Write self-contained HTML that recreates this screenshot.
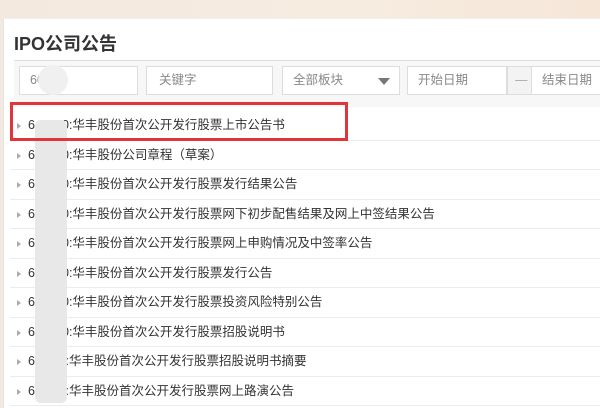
<!DOCTYPE html><html><head><meta charset="utf-8"><style>
*{margin:0;padding:0;box-sizing:border-box}
body{width:600px;height:403px;overflow:hidden;background:linear-gradient(90deg,#f3e9df,#f7ece0 60%,#f5e6d8);font-family:"Liberation Sans","Noto Sans CJK SC",sans-serif;position:relative}
.panel{position:absolute;left:3px;top:18px;width:600px;height:390px;background:#fff;border-left:1px solid #e4e4e4;border-top:1px solid #eee}
.title{position:absolute;left:10px;top:11px;font-size:18px;font-weight:bold;color:#333}
.bar{position:absolute;left:10px;top:41px;width:590px;height:47px;background:#f7f7f7;border-top:1px solid #ddd}
.in{position:absolute;top:5px;height:29px;background:#fff;border:1px solid #ddd;font-size:12.5px;color:#888;line-height:27px;padding-left:10px}
.row{position:absolute;left:10px;width:590px;height:29.5px;border-bottom:1px solid #ececec;font-size:12.5px;color:#333;line-height:29px}
.row .a{position:absolute;left:7px;top:12px;width:0;height:0;border-left:4px solid #aaa;border-top:3.5px solid transparent;border-bottom:3.5px solid transparent}
.row .t{position:absolute;left:18px}
.row .u{position:absolute;left:52px}
.blob{position:absolute;left:35px;top:120px;width:32px;height:283px;background:#e8e8e8;border-radius:6px}
.red{position:absolute;left:10px;top:102px;width:338px;height:39px;border:3px solid #e2353b}
</style></head><body>
<div class="panel">
<div class="title">IPO公司公告</div>
<div class="bar">
<div class="in" style="left:5px;width:119px">60</div>
<div class="in" style="left:132px;width:127px;padding-left:12px">关键字</div>
<div class="in" style="left:268px;width:118px">全部板块<span style="position:absolute;right:9px;top:11px;border-top:7px solid #777;border-left:6px solid transparent;border-right:6px solid transparent"></span></div>
<div class="in" style="left:393px;width:100px">开始日期</div>
<div class="in" style="left:493px;width:25px;background:#f3f3f3;padding-left:7px;color:#aaa">—</div>
<div class="in" style="left:517px;width:80px">结束日期</div>
</div>
</div>
<div style="position:absolute;left:38px;top:65px;width:30px;height:30px;border-radius:50%;background:#f0f0f0"></div>
<div class="row" style="top:111px"><i class="a"></i><span class="t">6</span><span class="u">0:华丰股份首次公开发行股票上市公告书</span></div>
<div class="row" style="top:140.5px"><i class="a"></i><span class="t">6</span><span class="u">0:华丰股份公司章程（草案）</span></div>
<div class="row" style="top:170px"><i class="a"></i><span class="t">6</span><span class="u">0:华丰股份首次公开发行股票发行结果公告</span></div>
<div class="row" style="top:199.5px"><i class="a"></i><span class="t">6</span><span class="u">0:华丰股份首次公开发行股票网下初步配售结果及网上中签结果公告</span></div>
<div class="row" style="top:229px"><i class="a"></i><span class="t">6</span><span class="u">0:华丰股份首次公开发行股票网上申购情况及中签率公告</span></div>
<div class="row" style="top:258.5px"><i class="a"></i><span class="t">6</span><span class="u">0:华丰股份首次公开发行股票发行公告</span></div>
<div class="row" style="top:288px"><i class="a"></i><span class="t">6</span><span class="u">0:华丰股份首次公开发行股票投资风险特别公告</span></div>
<div class="row" style="top:317.5px"><i class="a"></i><span class="t">6</span><span class="u">0:华丰股份首次公开发行股票招股说明书</span></div>
<div class="row" style="top:347px"><i class="a"></i><span class="t">60</span><span class="u">&nbsp;:华丰股份首次公开发行股票招股说明书摘要</span></div>
<div class="row" style="top:376.5px"><i class="a"></i><span class="t">60.</span><span class="u">&nbsp;:华丰股份首次公开发行股票网上路演公告</span></div>
<div class="blob"></div>
<div class="red"></div>
</body></html>
